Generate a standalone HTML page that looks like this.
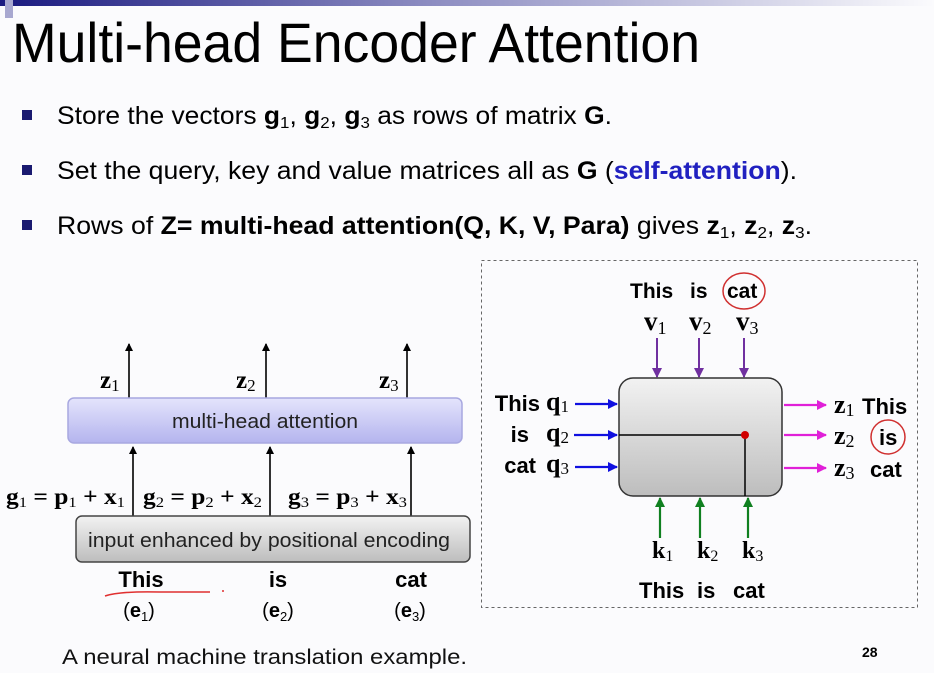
<!DOCTYPE html>
<html><head><meta charset="utf-8"><style>
html,body{margin:0;padding:0;background:#fbfbfd;}
svg{display:block;font-family:"Liberation Sans",sans-serif;}
.s{font-family:"Liberation Serif",serif;font-weight:bold;}
</style></head><body>
<svg width="934" height="673" viewBox="0 0 934 673" xmlns="http://www.w3.org/2000/svg">
<defs>
<linearGradient id="bar" x1="0" x2="1" y1="0" y2="0">
<stop offset="0" stop-color="#1a1a80"/><stop offset="0.45" stop-color="#8a8ac0"/><stop offset="1" stop-color="#fbfbfd"/></linearGradient>
<linearGradient id="pur" x1="0" x2="0" y1="0" y2="1">
<stop offset="0" stop-color="#e4e4fc"/><stop offset="1" stop-color="#b4b4ee"/></linearGradient>
<linearGradient id="gry" x1="0" x2="0" y1="0" y2="1">
<stop offset="0" stop-color="#f2f2f2"/><stop offset="1" stop-color="#bdbdbd"/></linearGradient>
<marker id="ak" markerWidth="8" markerHeight="8" refX="7" refY="4" orient="auto" markerUnits="userSpaceOnUse"><path d="M0,0 L8,4 L0,8 z" fill="#000"/></marker>
<marker id="ab" markerWidth="10" markerHeight="10" refX="9" refY="5" orient="auto" markerUnits="userSpaceOnUse"><path d="M0,0 L10,5 L0,10 z" fill="#1010e0"/></marker>
<marker id="am" markerWidth="10" markerHeight="10" refX="9" refY="5" orient="auto" markerUnits="userSpaceOnUse"><path d="M0,0 L10,5 L0,10 z" fill="#e020d8"/></marker>
<marker id="ap" markerWidth="10" markerHeight="10" refX="9" refY="5" orient="auto" markerUnits="userSpaceOnUse"><path d="M0,0 L10,5 L0,10 z" fill="#7030a0"/></marker>
<marker id="ag" markerWidth="10" markerHeight="10" refX="9" refY="5" orient="auto" markerUnits="userSpaceOnUse"><path d="M0,0 L10,5 L0,10 z" fill="#108020"/></marker>
</defs>
<rect x="0" y="0" width="934" height="6" fill="url(#bar)"/>
<rect x="5" y="0" width="8" height="18" fill="#a8a8d0"/>
<text x="12" y="62" font-size="56" textLength="688" lengthAdjust="spacingAndGlyphs">Multi-head Encoder Attention</text>

<rect x="22" y="110" width="10" height="10" fill="#1a1a70"/>
<rect x="22" y="165" width="10" height="10" fill="#1a1a70"/>
<rect x="22" y="220" width="10" height="10" fill="#1a1a70"/>
<text x="57" y="124" font-size="25" textLength="555" lengthAdjust="spacingAndGlyphs">Store the vectors <tspan font-weight="bold">g</tspan><tspan font-size="16" dy="4">1</tspan><tspan dy="-4">, </tspan><tspan font-weight="bold">g</tspan><tspan font-size="16" dy="4">2</tspan><tspan dy="-4">, </tspan><tspan font-weight="bold">g</tspan><tspan font-size="16" dy="4">3</tspan><tspan dy="-4"> as rows of matrix </tspan><tspan font-weight="bold">G</tspan>.</text>
<text x="57" y="179" font-size="25" textLength="740" lengthAdjust="spacingAndGlyphs">Set the query, key and value matrices all as <tspan font-weight="bold">G</tspan> (<tspan font-weight="bold" fill="#2020c0">self-attention</tspan>).</text>
<text x="57" y="234" font-size="25" textLength="755" lengthAdjust="spacingAndGlyphs">Rows of <tspan font-weight="bold">Z= multi-head attention(Q, K, V, Para)</tspan> gives <tspan font-weight="bold">z</tspan><tspan font-size="16" dy="4">1</tspan><tspan dy="-4">, </tspan><tspan font-weight="bold">z</tspan><tspan font-size="16" dy="4">2</tspan><tspan dy="-4">, </tspan><tspan font-weight="bold">z</tspan><tspan font-size="16" dy="4">3</tspan><tspan dy="-4">.</tspan></text>

<!-- left diagram -->
<g stroke="#000" stroke-width="1.6" marker-end="url(#ak)">
<line x1="129" y1="398" x2="129" y2="344"/><line x1="266" y1="398" x2="266" y2="344"/><line x1="407" y1="398" x2="407" y2="344"/>
<line x1="133" y1="516" x2="133" y2="447"/><line x1="270" y1="516" x2="270" y2="447"/><line x1="411" y1="516" x2="411" y2="447"/>
</g>
<text class="s" font-size="25" x="100" y="388">z<tspan font-size="17" font-weight="normal" dy="3">1</tspan></text>
<text class="s" font-size="25" x="236" y="388">z<tspan font-size="17" font-weight="normal" dy="3">2</tspan></text>
<text class="s" font-size="25" x="379" y="388">z<tspan font-size="17" font-weight="normal" dy="3">3</tspan></text>
<rect x="68" y="398" width="394" height="45" rx="6" fill="url(#pur)" stroke="#a8a8e0" stroke-width="1.5"/>
<text x="172" y="428" font-size="20" textLength="186" lengthAdjust="spacingAndGlyphs" fill="#222">multi-head attention</text>
<text class="s" font-size="23" x="6" y="504" textLength="119" lengthAdjust="spacingAndGlyphs">g<tspan font-size="15" font-weight="normal" dy="3">1</tspan><tspan dy="-3"> = p</tspan><tspan font-size="15" font-weight="normal" dy="3">1</tspan><tspan dy="-3"> + x</tspan><tspan font-size="15" font-weight="normal" dy="3">1</tspan></text>
<text class="s" font-size="23" x="143" y="504" textLength="119" lengthAdjust="spacingAndGlyphs">g<tspan font-size="15" font-weight="normal" dy="3">2</tspan><tspan dy="-3"> = p</tspan><tspan font-size="15" font-weight="normal" dy="3">2</tspan><tspan dy="-3"> + x</tspan><tspan font-size="15" font-weight="normal" dy="3">2</tspan></text>
<text class="s" font-size="23" x="288" y="504" textLength="119" lengthAdjust="spacingAndGlyphs">g<tspan font-size="15" font-weight="normal" dy="3">3</tspan><tspan dy="-3"> = p</tspan><tspan font-size="15" font-weight="normal" dy="3">3</tspan><tspan dy="-3"> + x</tspan><tspan font-size="15" font-weight="normal" dy="3">3</tspan></text>
<rect x="76" y="516" width="394" height="46" rx="6" fill="url(#gry)" stroke="#444" stroke-width="1.5"/>
<text x="88" y="547" font-size="20" textLength="362" lengthAdjust="spacingAndGlyphs" fill="#222">input enhanced by positional encoding</text>
<g font-weight="bold" font-size="22" text-anchor="middle">
<text x="141" y="587">This</text><text x="278" y="587">is</text><text x="411" y="587">cat</text>
</g>
<g font-size="20" text-anchor="middle">
<text x="139" y="617">(<tspan font-weight="bold">e</tspan><tspan font-size="13" dy="4">1</tspan><tspan dy="-4">)</tspan></text>
<text x="278" y="617">(<tspan font-weight="bold">e</tspan><tspan font-size="13" dy="4">2</tspan><tspan dy="-4">)</tspan></text>
<text x="410" y="617">(<tspan font-weight="bold">e</tspan><tspan font-size="13" dy="4">3</tspan><tspan dy="-4">)</tspan></text>
</g>
<path d="M105,596 Q120,591 160,592 L210,592" stroke="#e03030" stroke-width="1.5" fill="none"/>
<circle cx="223" cy="591" r="1" fill="#e03030"/>

<!-- right diagram -->
<rect x="481.5" y="260.5" width="436" height="347" fill="none" stroke="#666" stroke-dasharray="3,3"/>
<g font-weight="bold" font-size="21">
<text x="630" y="298">This</text><text x="690" y="298">is</text><text x="727" y="298">cat</text>
</g>
<ellipse cx="744" cy="291" rx="21" ry="18" fill="none" stroke="#d03030" stroke-width="1.5"/>
<g class="s" font-size="27">
<text x="644" y="330">v<tspan font-size="18" font-weight="normal" dy="4">1</tspan></text>
<text x="689" y="330">v<tspan font-size="18" font-weight="normal" dy="4">2</tspan></text>
<text x="736" y="330">v<tspan font-size="18" font-weight="normal" dy="4">3</tspan></text>
</g>
<g stroke="#7030a0" stroke-width="2" marker-end="url(#ap)">
<line x1="657" y1="338" x2="657" y2="377"/><line x1="699" y1="338" x2="699" y2="377"/><line x1="744" y1="338" x2="744" y2="377"/>
</g>
<rect x="619" y="378" width="163" height="118" rx="14" fill="url(#gry)" stroke="#333" stroke-width="1.5"/>
<line x1="619" y1="435" x2="746" y2="435" stroke="#000" stroke-width="1.5"/>
<line x1="745" y1="435" x2="745" y2="496" stroke="#000" stroke-width="1.5"/>
<circle cx="745" cy="435" r="4" fill="#d00000"/>
<g stroke="#1010e0" stroke-width="2.2" marker-end="url(#ab)">
<line x1="575" y1="404" x2="617" y2="404"/><line x1="574" y1="435" x2="617" y2="435"/><line x1="575" y1="467" x2="617" y2="467"/>
</g>
<g font-weight="bold" font-size="22" text-anchor="end">
<text x="540" y="411">This</text><text x="529" y="442">is</text><text x="536" y="473">cat</text>
</g>
<g class="s" font-size="26">
<text x="546" y="410">q<tspan font-size="17" font-weight="normal" dy="2">1</tspan></text>
<text x="546" y="441">q<tspan font-size="17" font-weight="normal" dy="2">2</tspan></text>
<text x="546" y="472">q<tspan font-size="17" font-weight="normal" dy="2">3</tspan></text>
</g>
<g stroke="#e020d8" stroke-width="2.2" marker-end="url(#am)">
<line x1="784" y1="405" x2="826" y2="405"/><line x1="784" y1="435" x2="826" y2="435"/><line x1="784" y1="468" x2="826" y2="468"/>
</g>
<g class="s" font-size="26">
<text x="834" y="413">z<tspan font-size="18" font-weight="normal" dy="3">1</tspan></text>
<text x="834" y="444">z<tspan font-size="18" font-weight="normal" dy="3">2</tspan></text>
<text x="834" y="476">z<tspan font-size="18" font-weight="normal" dy="3">3</tspan></text>
</g>
<g font-weight="bold" font-size="22">
<text x="862" y="414">This</text><text x="879" y="445">is</text><text x="870" y="477">cat</text>
</g>
<circle cx="888" cy="437" r="17" fill="none" stroke="#d03030" stroke-width="1.5"/>
<g stroke="#108020" stroke-width="2.2" marker-end="url(#ag)">
<line x1="660" y1="538" x2="660" y2="498"/><line x1="700" y1="538" x2="700" y2="498"/><line x1="748" y1="538" x2="748" y2="498"/>
</g>
<g class="s" font-size="24">
<text x="652" y="558">k<tspan font-size="16" font-weight="normal" dy="3">1</tspan></text>
<text x="697" y="558">k<tspan font-size="16" font-weight="normal" dy="3">2</tspan></text>
<text x="742" y="558">k<tspan font-size="16" font-weight="normal" dy="3">3</tspan></text>
</g>
<g font-weight="bold" font-size="22">
<text x="639" y="598">This</text><text x="697" y="598">is</text><text x="733" y="598">cat</text>
</g>

<text x="62" y="664" font-size="21" textLength="405" lengthAdjust="spacingAndGlyphs" fill="#111">A neural machine translation example.</text>
<text x="862" y="657" font-size="14" font-weight="bold">28</text>
</svg>
</body></html>
